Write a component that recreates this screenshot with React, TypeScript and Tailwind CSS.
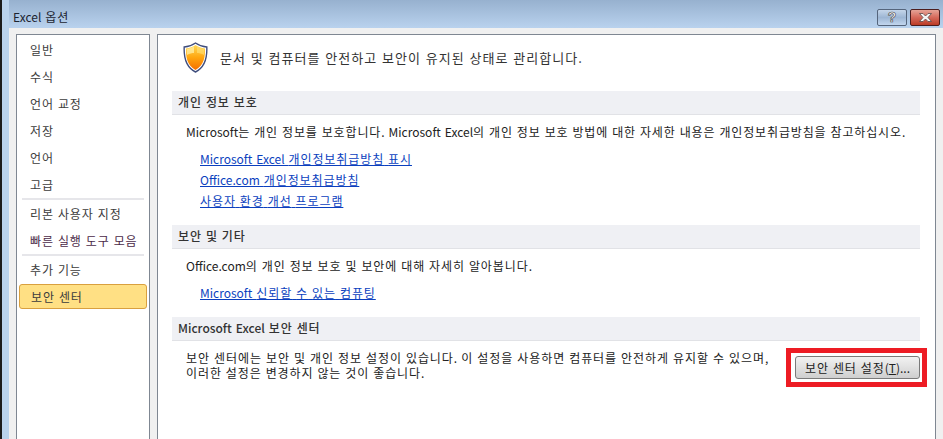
const font = { fontFamily: '"Noto Sans CJK KR", "Noto Sans", sans-serif' };

function K({ t, big, track }: { t: string; big?: boolean; track?: string }) {
  const spacing = track ?? (big ? 'tracking-[1.05px]' : 'tracking-[0.9px]');
  return (
    <span className={big ? '[word-spacing:1.8px]' : '[word-spacing:1.3px]'}>
      {t.split(/([\uAC00-\uD7A3]+)/).map((part, i) =>
        /[\uAC00-\uD7A3]/.test(part) ? (
          <span key={i} className={spacing}>{part}</span>
        ) : (
          part
        )
      )}
    </span>
  );
}

function NavItem({ label, active, plum }: { label: string; active?: boolean; plum?: boolean }) {
  return (
    <div
      className={`h-[27px] flex items-center pl-[11px] mx-[2px] text-[12px] ${plum ? 'text-[#4b2a48]' : 'text-[#3c3c3c]'}`}
    >
      {active ? (
        <div className="h-[25px] w-[128px] -ml-[11px] pl-[11px] flex items-center rounded-[3px] border border-[#d9a03f] bg-[#ffe084]"><K t={label} /></div>
      ) : (
        <K t={label} />
      )}
    </div>
  );
}

function Sep() {
  return <div className="h-[2px] mx-[5px] bg-[#e6e6ea]" />;
}

function Head({ t }: { t: string }) {
  return (
    <div className="h-[24px] bg-[#eff0f4] border-b border-[#e1e2e6] pl-[6px] pb-[1px] flex items-center text-[12px] font-medium text-[#333]">
      <K t={t} />
    </div>
  );
}

function A({ t }: { t: string }) {
  return <div className="h-[21px] flex items-center text-[12px] text-[#0b3fbe] underline"><K t={t} /></div>;
}

export default function App() {
  return (
    <div style={font} className="w-[943px] h-[439px] overflow-hidden flex bg-[#f0f0f0]">
      <div className="w-[2px] bg-[#1b1b1b]" />
      <div className="w-[7px] bg-[#b9d2ec]" />
      <div className="flex-1 flex flex-col min-w-0">
        <div className="h-[28px] bg-gradient-to-b from-[#97b1cf] to-[#b9d2ee] flex items-center justify-between pt-[6px] pl-[4px] pr-[3px]">
          <span className="text-[12px] text-[#1c2430]"><K t="Excel 옵션" /></span>
          <div className="flex gap-[3px]">
            <div className="w-[30px] h-[17px] rounded-[2px] border border-[#55657c] bg-gradient-to-b from-[#c5d6ea] via-[#9db6d4] to-[#c2d6ee] flex items-center justify-center">
              <span className="text-[14px] font-bold leading-none text-white [-webkit-text-stroke:0.6px_#444]" style={{ fontFamily: '"Liberation Sans", sans-serif' }}>?</span>
            </div>
            <div className="w-[30px] h-[17px] rounded-[2px] border border-[#4c1d1d] bg-gradient-to-b from-[#e5a397] via-[#d5685a] to-[#bb3a24] flex items-center justify-center">
              <svg width="15" height="11" viewBox="0 0 15 11">
                <path d="M1.5 1.5h3.5L7.5 4 10 1.5h3.5L10 5.5l3.5 4H10L7.5 7 5 9.5H1.5L5 5.5z" fill="#f4f4f4" stroke="#5a4848" strokeWidth="0.8" />
              </svg>
            </div>
          </div>
        </div>
        <div className="flex-1 flex gap-[7px] pt-[6px] pl-[7px] pr-[7px] min-h-0">
          <div className="w-[134px] border border-b-0 border-[#7f8792] bg-white pt-[1px]">
            <NavItem label="일반" />
            <NavItem label="수식" />
            <NavItem label="언어 교정" />
            <NavItem label="저장" />
            <NavItem label="언어" />
            <NavItem label="고급" />
            <Sep />
            <NavItem label="리본 사용자 지정" />
            <NavItem label="빠른 실행 도구 모음" plum />
            <Sep />
            <NavItem label="추가 기능" />
            <NavItem label="보안 센터" active />
          </div>
          <div className="flex-1 border border-b-0 border-[#7f8792] bg-white pl-[14px] pr-[15px] text-[#222]">
            <div className="h-[56px] flex items-center pl-[11px] pb-[11px] gap-[12px]">
              <svg width="25" height="31" viewBox="0 0 25 31" className="-mt-[1px]">
                <defs>
                  <linearGradient id="sh" x1="0" y1="0" x2="0" y2="1">
                    <stop offset="0" stopColor="#ffd957" />
                    <stop offset="0.5" stopColor="#ffa60f" />
                    <stop offset="1" stopColor="#f46f00" />
                  </linearGradient>
                </defs>
                <path d="M12.5 1C9.5 3.2 5.5 4.6 1.2 5 .8 14.5 2 25 12.5 30 23 25 24.2 14.5 23.8 5 19.500 4.600 15.500 3.200 12.500 1z" fill="#fff" stroke="#3f4d7c" strokeWidth="1.4" />
                <path d="M12.500 3C10 4.800 6.800 6 3 6.500 2.800 14.500 3.800 23.500 12.500 28 21.200 23.500 22.200 14.500 22 6.500 18.200 6 15 4.800 12.500 3z" fill="url(#sh)" />
                <path d="M11 4.500C9 5.700 6.500 6.600 3.800 7 3.700 9 3.800 11 4.100 13 6.500 11.500 9 11 11 11z" fill="#ffeea0" opacity="0.8" />
                <path d="M14 4.500C16 5.700 18.500 6.600 21.200 7 21.300 9 21.200 11 20.900 13 18.500 11.500 16 11 14 11z" fill="#ffe27a" opacity="0.6" />
              </svg>
              <span className="text-[13px] text-[#333]"><K big t="문서 및 컴퓨터를 안전하고 보안이 유지된 상태로 관리합니다." /></span>
            </div>
            <Head t="개인 정보 보호" />
            <div className="pl-[14px] pt-[2px] h-[32px] flex items-center text-[12px] whitespace-nowrap">
              <K track="tracking-[0.86px]" t="Microsoft는 개인 정보를 보호합니다. Microsoft Excel의 개인 정보 보호 방법에 대한 자세한 내용은 개인정보취급방침을 참고하십시오." />
            </div>
            <div className="pl-[28px] pt-[1px] h-[78px]">
              <A t="Microsoft Excel 개인정보취급방침 표시" />
              <A t="Office.com 개인정보취급방침" />
              <A t="사용자 환경 개선 프로그램" />
            </div>
            <Head t="보안 및 기타" />
            <div className="pl-[14px] pt-[2px] h-[32px] flex items-center text-[12px] whitespace-nowrap">
              <K t="Office.com의 개인 정보 보호 및 보안에 대해 자세히 알아봅니다." />
            </div>
            <div className="pl-[28px] pt-[1px] h-[36px]">
              <A t="Microsoft 신뢰할 수 있는 컴퓨팅" />
            </div>
            <Head t="Microsoft Excel 보안 센터" />
            <div className="flex items-start pt-[8px]">
              <div className="pl-[14px] flex-1 text-[12px] leading-[15px] pt-[1px] whitespace-nowrap">
                <div><K track="tracking-[0.95px]" t="보안 센터에는 보안 및 개인 정보 설정이 있습니다. 이 설정을 사용하면 컴퓨터를 안전하게 유지할 수 있으며," /></div>
                <div><K t="이러한 설정은 변경하지 않는 것이 좋습니다." /></div>
              </div>
              <div className="border-[5px] border-[#ed1c24] pt-[3px] pb-[3px] pl-[4px] pr-[2px] mr-[-7px] mt-[-1px]">
                <button className="w-[125px] h-[23px] pt-[1px] rounded-[3px] border border-[#7a7a7a] bg-gradient-to-b from-[#f2f2f2] to-[#cfcfcf] text-[12px] text-[#222] flex items-center justify-center whitespace-nowrap">
                  <K t="보안 센터 설정" />(<span className="underline">T</span>)...
                </button>
              </div>
            </div>
          </div>
        </div>
      </div>
    </div>
  );
}
